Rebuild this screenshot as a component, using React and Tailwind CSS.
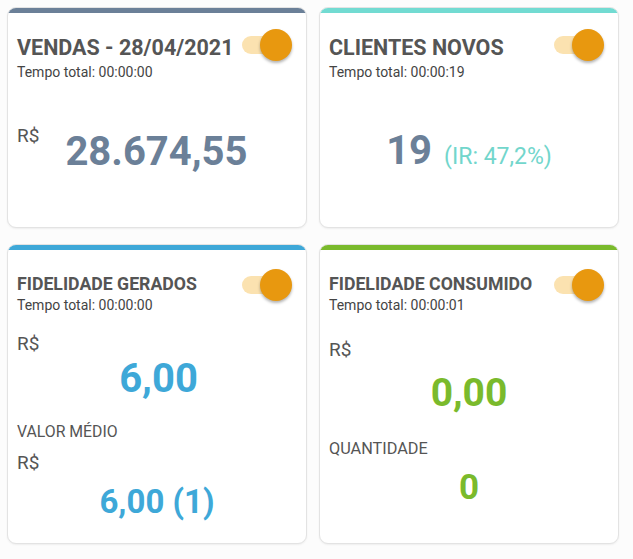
import React from "react";

const Toggle = () => (
  <div className="relative w-[50px] h-[32px] shrink-0">
    <div className="absolute left-0 top-[7px] w-[46px] h-[18px] rounded-full bg-[#fbe2b0]" />
    <div className="absolute right-0 top-0 w-[32px] h-[32px] rounded-full bg-[#e8980f] shadow-[0_2px_3px_rgba(0,0,0,0.3)]" />
  </div>
);

const Card = ({ bar, title, big, time, children }) => (
  <div className="flex flex-col rounded-[9px] border border-[#e3e3e3] bg-white overflow-hidden shadow-[0_1px_2px_rgba(0,0,0,0.06)]">
    <div className={`h-[5px] ${bar}`} />
    <div className="flex items-start justify-between pl-[9px] pr-[14px] pt-[24px]">
      <div>
        <div className={`font-bold text-[#555] leading-none ${big ? "text-[21.5px]" : "text-[17.7px] mt-[2px]"}`}>{title}</div>
        <div className={`text-[14px] text-[#444] leading-none ${big ? "mt-[6px]" : "mt-[4px]"}`}>{time}</div>
      </div>
      <div className={big ? "-mt-[8px]" : "-mt-[5px]"}>
        <Toggle />
      </div>
    </div>
    {children}
  </div>
);

export default function App() {
  return (
    <div className="w-[633px] h-[559px] bg-[#fcfcfc] font-['Roboto',sans-serif] px-[7px] pt-[7px]">
      <div className="grid grid-cols-[300px_300px] gap-x-[12px] gap-y-[16px]">
        <div className="h-[221px] grid">
          <Card bar="bg-[#6b8098]" title="VENDAS - 28/04/2021" big time="Tempo total: 00:00:00">
            <div className="flex items-start pl-[9px] pt-[47px]">
              <span className="text-[19px] text-[#555] leading-none">R$</span>
              <span className="ml-[26px] mt-[6px] text-[40px] font-bold text-[#6b8098] leading-none">28.674,55</span>
            </div>
          </Card>
        </div>
        <div className="h-[221px] grid">
          <Card bar="bg-[#72dbd2]" title="CLIENTES NOVOS" big time="Tempo total: 00:00:19">
            <div className="flex items-baseline justify-center pt-[52px]">
              <span className="text-[40px] font-bold text-[#6b8098] leading-none">19</span>
              <span className="ml-[12px] text-[23px] text-[#72d6cc] leading-none">(IR: 47,2%)</span>
            </div>
          </Card>
        </div>
        <div className="h-[300px] grid">
          <Card bar="bg-[#3ea8d8]" title="FIDELIDADE GERADOS" time="Tempo total: 00:00:00">
            <div className="flex flex-col px-[9px] pt-[22px]">
              <span className="text-[19px] text-[#555] leading-none">R$</span>
              <span className="self-center ml-[3px] mt-[6px] text-[40px] font-bold text-[#3ea8d8] leading-none">6,00</span>
              <span className="mt-[25px] text-[15.8px] text-[#555] leading-none">VALOR MÉDIO</span>
              <span className="mt-[13px] text-[19px] text-[#555] leading-none">R$</span>
              <span className="self-center mt-[13px] text-[33px] font-bold text-[#3ea8d8] leading-none">6,00 (1)</span>
            </div>
          </Card>
        </div>
        <div className="h-[300px] grid">
          <Card bar="bg-[#7aba2c]" title="FIDELIDADE CONSUMIDO" time="Tempo total: 00:00:01">
            <div className="flex flex-col px-[9px] pt-[28px]">
              <span className="text-[19px] text-[#555] leading-none">R$</span>
              <span className="self-center mt-[15px] text-[39px] font-bold text-[#7aba2c] leading-none">0,00</span>
              <span className="mt-[28px] text-[16.3px] text-[#555] leading-none">QUANTIDADE</span>
              <span className="self-center mt-[13px] text-[35px] font-bold text-[#7aba2c] leading-none">0</span>
            </div>
          </Card>
        </div>
      </div>
    </div>
  );
}
